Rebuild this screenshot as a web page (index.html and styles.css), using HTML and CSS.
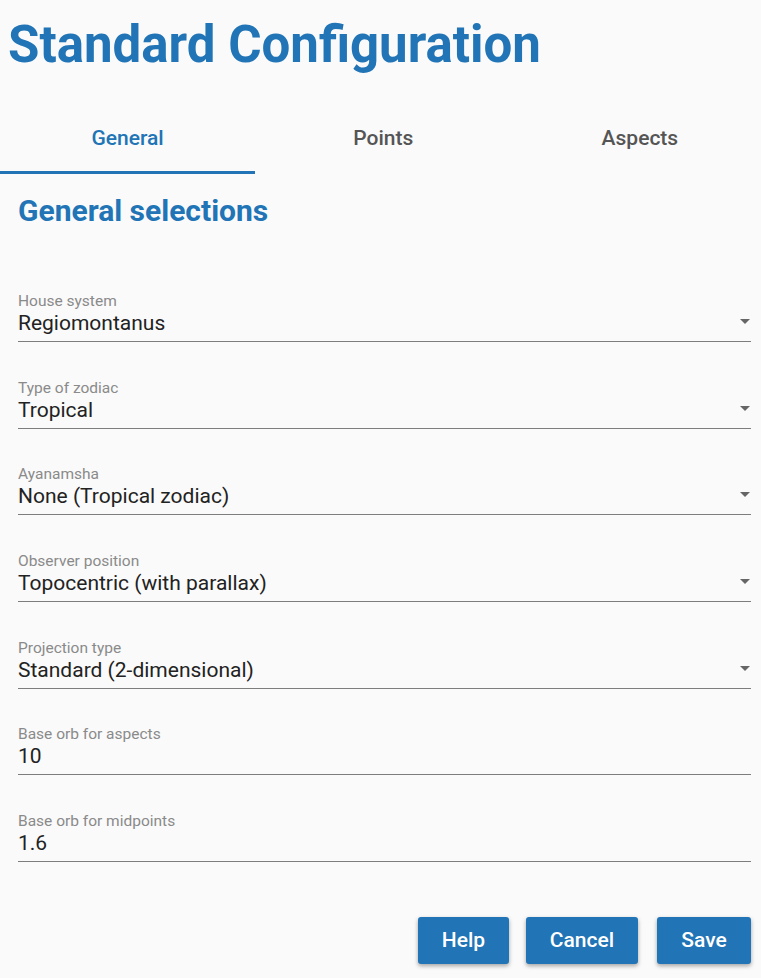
FILE: index.html
```html
<!DOCTYPE html>
<html lang="en">
<head>
<meta charset="utf-8">
<title>Standard Configuration</title>
<link rel="stylesheet" href="styles.css">
</head>
<body>
<h1 class="title">Standard Configuration</h1>
<nav class="tabs">
  <div class="tab active">General</div>
  <div class="tab">Points</div>
  <div class="tab">Aspects</div>
</nav>
<main class="content">
  <h2 class="section">General selections</h2>
  <div class="fields">
    <div class="field select">
      <div class="label">House system</div>
      <div class="value">Regiomontanus</div>
      <span class="arrow"></span>
    </div>
    <div class="field select">
      <div class="label">Type of zodiac</div>
      <div class="value">Tropical</div>
      <span class="arrow"></span>
    </div>
    <div class="field select">
      <div class="label">Ayanamsha</div>
      <div class="value">None (Tropical zodiac)</div>
      <span class="arrow"></span>
    </div>
    <div class="field select">
      <div class="label">Observer position</div>
      <div class="value">Topocentric (with parallax)</div>
      <span class="arrow"></span>
    </div>
    <div class="field select">
      <div class="label">Projection type</div>
      <div class="value">Standard (2-dimensional)</div>
      <span class="arrow"></span>
    </div>
    <div class="field">
      <div class="label">Base orb for aspects</div>
      <div class="value">10</div>
    </div>
    <div class="field">
      <div class="label">Base orb for midpoints</div>
      <div class="value">1.6</div>
    </div>
  </div>
  <div class="actions">
    <button class="btn help">Help</button>
    <button class="btn cancel">Cancel</button>
    <button class="btn save">Save</button>
  </div>
</main>
</body>
</html>
```
FILE: styles.css
```css
html, body {
  margin: 0;
  padding: 0;
  background: #fafafa;
}
body {
  font-family: Roboto, "Liberation Sans", Arial, sans-serif;
  width: 761px;
  height: 978px;
  overflow: hidden;
}
.title {
  margin: 9px 0 0 0;
  padding-left: 8px;
  font-size: 51px;
  line-height: 72px;
  font-weight: 700;
  color: #2174b5;
}
.tabs {
  display: flex;
  width: 770px;
  margin-top: 24px;
}
.tab {
  flex: 0 0 256.6px;
  height: 66px;
  display: flex;
  align-items: center;
  justify-content: center;
  font-size: 21px;
  font-weight: 500;
  color: #555;
  border-bottom: 3px solid transparent;
  box-sizing: content-box;
}
.tab.active {
  flex-basis: 255px;
  color: #2174b5;
  border-bottom-color: #2174b5;
}
.content {
  padding: 0 10px 0 18px;
}
.section {
  margin: 18.7px 0 0 0;
  font-size: 30px;
  line-height: 36px;
  font-weight: 700;
  color: #2174b5;
}
.fields {
  margin-top: 63.3px;
  display: flex;
  flex-direction: column;
  gap: 36.67px;
}
.field {
  position: relative;
  border-bottom: 1px solid #7d7d7d;
  padding-bottom: 6px;
}
.label {
  font-size: 15.5px;
  line-height: 18px;
  color: #8a8a8a;
}
.value {
  margin-top: 1px;
  font-size: 21px;
  line-height: 24px;
  color: #222;
}
.arrow {
  position: absolute;
  right: 1px;
  top: 27px;
  width: 0;
  height: 0;
  border-left: 5.5px solid transparent;
  border-right: 5.5px solid transparent;
  border-top: 5.5px solid #666;
}
.actions {
  display: flex;
  justify-content: flex-end;
  gap: 18px;
  margin-top: 55px;
}
.btn {
  height: 47px;
  border: none;
  border-radius: 3px;
  background: #2174b5;
  color: #fff;
  font-family: Roboto, "Liberation Sans", Arial, sans-serif;
  font-size: 21px;
  font-weight: 500;
  padding: 0;
  box-shadow: 0 2px 4px rgba(0, 0, 0, 0.35);
}
.help { width: 91px; }
.cancel { width: 112px; margin-left: -1px; }
.save { width: 94px; margin-left: 1px; }
```
